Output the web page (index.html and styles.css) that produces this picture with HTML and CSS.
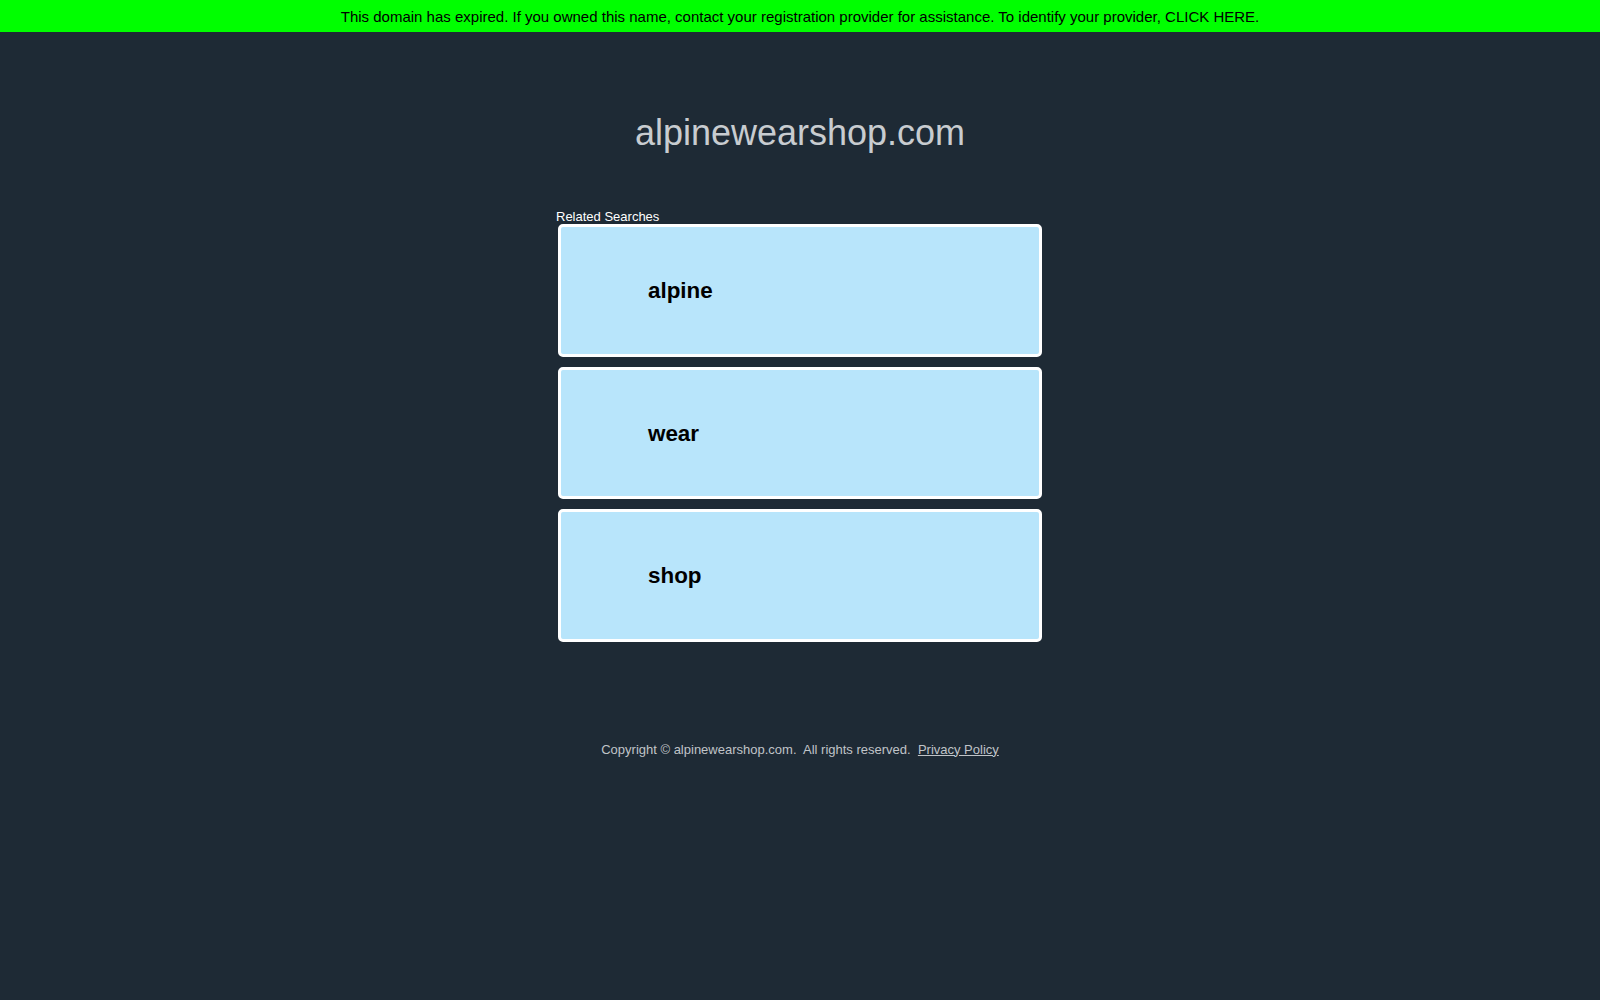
FILE: index.html
```html
<!DOCTYPE html>
<html lang="en">
<head>
<meta charset="utf-8">
<title>alpinewearshop.com</title>
<link rel="stylesheet" href="styles.css">
</head>
<body>
<div class="banner"><a class="banner-link" href="#">This domain has expired. If you owned this name, contact your registration provider for assistance. To identify your provider, CLICK HERE.</a></div>
<main class="main">
  <h1 class="domain">alpinewearshop.com</h1>
  <section class="related">
    <div class="related-label">Related Searches</div>
    <a class="card" href="#"><span class="card-text">alpine</span></a>
    <a class="card" href="#"><span class="card-text">wear</span></a>
    <a class="card" href="#"><span class="card-text">shop</span></a>
  </section>
  <footer class="footer">Copyright &copy; alpinewearshop.com.&nbsp; All rights reserved.&nbsp; <a class="footer-link" href="#">Privacy Policy</a></footer>
</main>
</body>
</html>
```
FILE: styles.css
```css
html, body {
  margin: 0;
  padding: 0;
}
body {
  background: #1e2a35;
  font-family: "Liberation Sans", Arial, sans-serif;
  min-height: 1000px;
}
.banner {
  height: 32px;
  line-height: 33px;
  background: #00ff00;
  text-align: center;
  font-size: 15px;
}
.banner-link {
  color: #000;
  text-decoration: none;
}
.main {
  display: flex;
  flex-direction: column;
  align-items: center;
}
.domain {
  margin: 81px 0 0;
  font-size: 36px;
  line-height: 40px;
  font-weight: normal;
  color: #c8ccd0;
}
.related {
  width: 488px;
  margin-top: 56px;
  display: flex;
  flex-direction: column;
}
.related-label {
  color: #fff;
  font-size: 13px;
  line-height: 15px;
}
.card {
  box-sizing: border-box;
  width: 484px;
  height: 132.5px;
  margin: 0 2px 10px;
  background: #b8e5fb;
  border: 3px solid #fff;
  border-radius: 5px;
  display: flex;
  align-items: center;
  padding-left: 87px;
  padding-top: 1.5px;
  text-decoration: none;
}
.card-text {
  color: #000;
  font-size: 22.4px;
  font-weight: bold;
}
.footer {
  margin-top: 90px;
  color: #c0c4c8;
  font-size: 13px;
  line-height: 15px;
}
.footer-link {
  color: #c0c4c8;
  text-decoration: underline;
}
```
